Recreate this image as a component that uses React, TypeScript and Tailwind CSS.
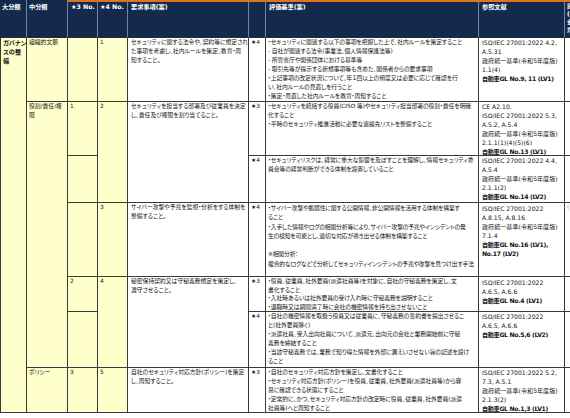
import React from "react";

type RefLine = { t: string; b?: boolean };

const base =
  "font-['DejaVu_Sans','Noto_Sans_CJK_JP',sans-serif] [font-feature-settings:'palt'] text-[5.8px] leading-[9px] text-[#141414]";

function Lines({ lines, lh }: { lines: string[]; lh?: string }) {
  return (
    <>
      {lines.map((l, i) => (
        <div key={i} className={`whitespace-nowrap ${lh ?? "h-[9px]"}`}>
          {l === "" ? "\u00a0" : l}
        </div>
      ))}
    </>
  );
}

function Refs({ lines }: { lines: RefLine[] }) {
  return (
    <>
      {lines.map((l, i) => (
        <div
          key={i}
          className={`whitespace-nowrap h-[9px] ${l.b ? "font-bold tracking-[-0.3px]" : ""}`}
        >
          {l.t}
        </div>
      ))}
    </>
  );
}

const cellB = "border-r border-b border-[#3a3a3a] overflow-hidden px-[2px]";
const yellow = "bg-[#ffffcc]";
const ref = "text-[6.1px] px-[3px]";
const ev = "tracking-[-0.05px]";

export default function App() {
  return (
    <div className="w-[570px] h-[418px] overflow-hidden bg-white">
      <div
        className={`grid w-[605px] grid-cols-[27px_41px_30px_30px_121px_17px_213px_86px_40px] grid-rows-[38px_64px_54px_47px_74px_35px_56px_45px] ${base}`}
      >
        {/* header */}
        <div className="col-start-1 row-start-1 bg-[#142a4c] text-white font-bold text-[6.2px] border-r border-[#74849c] border-b border-b-[#2a2a2a] px-[2px] pt-[2px] whitespace-nowrap overflow-hidden">
          大分類
        </div>
        <div className="col-start-2 row-start-1 bg-[#142a4c] text-white font-bold text-[6.2px] border-r border-[#74849c] border-b border-b-[#2a2a2a] px-[2px] pt-[2px] whitespace-nowrap overflow-hidden">
          中分類
        </div>
        <div className="col-start-3 row-start-1 bg-[#142a4c] text-white font-bold text-[6.2px] border-r border-[#74849c] border-b border-b-[#2a2a2a] border-t-2 border-t-[#e0731f] px-[3px] whitespace-nowrap overflow-hidden">
          ★3 No.
        </div>
        <div className="col-start-4 row-start-1 bg-[#142a4c] text-white font-bold text-[6.2px] border-r border-[#74849c] border-b border-b-[#2a2a2a] border-t-2 border-t-[#e0731f] px-[2px] whitespace-nowrap overflow-hidden">
          ★4 No.
        </div>
        <div className="col-start-5 row-start-1 bg-[#142a4c] text-white font-bold text-[6.2px] border-r border-[#74849c] border-b border-b-[#2a2a2a] border-t-2 border-t-[#e0731f] px-[3px] whitespace-nowrap overflow-hidden">
          要求事項(案)
        </div>
        <div className="col-start-6 row-start-1 bg-[#142a4c] border-r border-[#74849c] border-b border-b-[#2a2a2a] border-t-2 border-t-[#e0731f]" />
        <div className="col-start-7 row-start-1 bg-[#142a4c] text-white font-bold text-[6.2px] border-r border-[#74849c] border-b border-b-[#2a2a2a] border-t-2 border-t-[#e0731f] px-[3px] whitespace-nowrap overflow-hidden">
          評価基準(案)
        </div>
        <div className="col-start-8 row-start-1 bg-[#142a4c] text-white font-bold text-[6.2px] border-r border-[#74849c] border-b border-b-[#2a2a2a] border-t-2 border-t-[#e0731f] px-[3px] whitespace-nowrap overflow-hidden">
          参照文献
        </div>
        <div className="col-start-9 row-start-1 bg-[#142a4c] text-white font-bold text-[6.2px] border-b border-b-[#2a2a2a] border-t-2 border-t-[#e0731f] px-[2px] overflow-hidden leading-[8px]">
          <div>評</div>
          <div>(</div>
          <div>金</div>
          <div>た</div>
        </div>

        {/* col1 大分類 */}
        <div className={`col-start-1 row-start-2 row-span-7 border-l ${cellB} ${yellow} font-bold text-[6.2px]`}>
          <Lines lines={["ガバナン", "スの整", "備"]} />
        </div>

        {/* col2 中分類 */}
        <div className={`col-start-2 row-start-2 ${cellB} ${yellow}`}>
          <Lines lines={["組織的文脈"]} />
        </div>
        <div className={`col-start-2 row-start-3 row-span-5 ${cellB} ${yellow}`}>
          <Lines lines={["役割/責任/権", "限"]} />
        </div>
        <div className={`col-start-2 row-start-8 ${cellB} ${yellow}`}>
          <Lines lines={["ポリシー"]} />
        </div>

        {/* col3 ★3 No. */}
        <div className={`col-start-3 row-start-2 ${cellB} ${yellow}`} />
        <div className={`col-start-3 row-start-3 ${cellB} ${yellow}`}>1</div>
        <div className={`col-start-3 row-start-4 ${cellB} ${yellow}`} />
        <div className={`col-start-3 row-start-5 ${cellB} ${yellow}`} />
        <div className={`col-start-3 row-start-6 ${cellB} ${yellow}`}>2</div>
        <div className={`col-start-3 row-start-7 ${cellB} ${yellow}`} />
        <div className={`col-start-3 row-start-8 ${cellB} ${yellow}`}>3</div>

        {/* col4 ★4 No. */}
        <div className={`col-start-4 row-start-2 ${cellB} ${yellow}`}>1</div>
        <div className={`col-start-4 row-start-3 row-span-2 ${cellB} ${yellow}`}>2</div>
        <div className={`col-start-4 row-start-5 ${cellB} ${yellow}`}>3</div>
        <div className={`col-start-4 row-start-6 row-span-2 ${cellB} ${yellow}`}>4</div>
        <div className={`col-start-4 row-start-8 ${cellB} ${yellow}`}>5</div>

        {/* col5 要求事項 */}
        <div className={`col-start-5 row-start-2 ${cellB} px-[3px]`}>
          <Lines
            lines={[
              "セキュリティに関する法令や、契約等に規定され",
              "た事項を考慮し、社内ルールを策定、教育・周",
              "知すること。",
            ]}
          />
        </div>
        <div className={`col-start-5 row-start-3 row-span-2 ${cellB} px-[3px]`}>
          <Lines lines={["セキュリティを担当する部署及び従業員を決定", "し、責任及び権限を割り当てること。"]} />
        </div>
        <div className={`col-start-5 row-start-5 ${cellB} px-[3px]`}>
          <Lines lines={["サイバー攻撃や予兆を監視・分析をする体制を", "整備すること。"]} />
        </div>
        <div className={`col-start-5 row-start-6 row-span-2 ${cellB} px-[3px]`}>
          <Lines lines={["秘密保持契約又は守秘義務規定を策定し、", "遵守させること。"]} />
        </div>
        <div className={`col-start-5 row-start-8 ${cellB} px-[3px]`}>
          <Lines lines={["自社のセキュリティ対応方針(ポリシー)を策定", "し、周知すること。"]} />
        </div>

        {/* col6 star */}
        <div className={`col-start-6 row-start-2 ${cellB} whitespace-nowrap`}>★4</div>
        <div className={`col-start-6 row-start-3 ${cellB} whitespace-nowrap`}>★3</div>
        <div className={`col-start-6 row-start-4 ${cellB} whitespace-nowrap`}>★4</div>
        <div className={`col-start-6 row-start-5 ${cellB} whitespace-nowrap`}>★4</div>
        <div className={`col-start-6 row-start-6 ${cellB} whitespace-nowrap`}>★3</div>
        <div className={`col-start-6 row-start-7 ${cellB} whitespace-nowrap`}>★4</div>
        <div className={`col-start-6 row-start-8 ${cellB} whitespace-nowrap`}>★3</div>

        {/* col7 評価基準 */}
        <div className={`col-start-7 row-start-2 ${cellB} ${ev}`}>
          <Lines
            lines={[
              "・セキュリティに関連する以下の事項を把握した上で、社内ルールを策定すること",
              "- 自社が関連する法令(事業法、個人情報保護法等)",
              "- 所管省庁や関係団体における基準等",
              "- 取引先等が提示する新規事項等も含めた、関係者からの要求事項",
              "・上記事項の改定状況について、年１回以上の頻度又は必要に応じて確認を行",
              "い、社内ルールの見直しを行うこと",
              "・策定・見直した社内ルールを教育・周知すること",
            ]}
          />
        </div>
        <div className={`col-start-7 row-start-3 ${cellB} ${ev}`}>
          <Lines
            lines={[
              "・セキュリティを統括する役員(CISO 等)やセキュリティ担当部署の役割・責任を明確",
              "化すること",
              "・平時のセキュリティ推進活動に必要な連絡先リストを整備すること",
            ]}
          />
        </div>
        <div className={`col-start-7 row-start-4 ${cellB} ${ev}`}>
          <Lines
            lines={[
              "・セキュリティリスクは、経営に重大な影響を及ぼすことを理解し、情報セキュリティ委",
              "員会等の経営判断ができる体制を設置していること",
            ]}
          />
        </div>
        <div className={`col-start-7 row-start-5 ${cellB} tracking-[-0.15px] pt-[1px]`}>
          <Lines
            lines={[
              "・サイバー攻撃や脆弱性に関する公開情報、非公開情報を活用する体制を構築す",
              "ること",
              "・入手した情報やログの相関分析等により、サイバー攻撃の予兆やインシデントの発",
              "生の検知を可能とし、適切な対応が導き出せる体制を構築すること",
              "",
              "※相関分析：",
              "複合的なログなどで分析してセキュリティインシデントの予兆や攻撃を見つけ出す手法",
            ]}
            lh="h-[9.3px] leading-[9.3px]"
          />
        </div>
        <div className={`col-start-7 row-start-6 ${cellB} ${ev}`}>
          <Lines
            lines={[
              "・役員、従業員、社外要員(派遣社員等)を対象に、自社の守秘義務を策定し、文",
              "書化すること",
              "・入社時あるいは社外要員の受け入れ時に守秘義務を説明すること",
              "・退職時又は期間満了時に会社の機密情報を持ち出させないこと",
            ]}
            lh="h-[8.6px] leading-[8.6px]"
          />
        </div>
        <div className={`col-start-7 row-start-7 ${cellB} ${ev}`}>
          <Lines
            lines={[
              "・自社の機密情報を取扱う役員又は従業員に、守秘義務の誓約書を提出させるこ",
              "と(社外要員除く)",
              "・派遣社員、受入出向社員について、派遣元、出向元の会社と業務開始前に守秘",
              "義務を締結すること",
              "・当該守秘義務では、業務で知り得た情報を外部に漏えいさせない旨の記述を設け",
              "ること",
            ]}
          />
        </div>
        <div className={`col-start-7 row-start-8 ${cellB} ${ev}`}>
          <Lines
            lines={[
              "・自社のセキュリティ対応方針を策定し、文書化すること",
              "・セキュリティ対応方針(ポリシー)を役員、従業員、社外要員(派遣社員等)から容",
              "易に確認できる状態にすること",
              "・定常的に、かつ、セキュリティ対応方針の改定時に役員、従業員、社外要員(派遣",
              "社員等)へと周知すること",
            ]}
          />
        </div>

        {/* col8 参照文献 */}
        <div className={`col-start-8 row-start-2 ${cellB} ${ref}`}>
          <Refs
            lines={[
              { t: "ISO/IEC 27001:2022 4.2," },
              { t: "A.5.31" },
              { t: "政府統一基準(令和5年度版)" },
              { t: "1.1(4)" },
              { t: "自動車GL No.9, 11 (LV1)", b: true },
            ]}
          />
        </div>
        <div className={`col-start-8 row-start-3 ${cellB} ${ref}`}>
          <Refs
            lines={[
              { t: "CE A2.10." },
              { t: "ISO/IEC 27001:2022 5.3," },
              { t: "A.5.2, A.5.4" },
              { t: "政府統一基準(令和5年度版)" },
              { t: "2.1.1(1)(4)(5)(6)" },
              { t: "自動車GL No.13 (LV1)", b: true },
            ]}
          />
        </div>
        <div className={`col-start-8 row-start-4 ${cellB} ${ref}`}>
          <Refs
            lines={[
              { t: "ISO/IEC 27001:2022 4.4," },
              { t: "A.5.4" },
              { t: "政府統一基準(令和5年度版)" },
              { t: "2.1.1(2)" },
              { t: "自動車GL No.14 (LV2)", b: true },
            ]}
          />
        </div>
        <div className={`col-start-8 row-start-5 ${cellB} ${ref} pt-[1px]`}>
          <Refs
            lines={[
              { t: "ISO/IEC 27001:2022" },
              { t: "A.8.15, A.8.16" },
              { t: "政府統一基準(令和5年度版)" },
              { t: "7.1.4" },
              { t: "自動車GL No.16 (LV1),", b: true },
              { t: "No.17 (LV2)", b: true },
            ]}
          />
        </div>
        <div className={`col-start-8 row-start-6 ${cellB} ${ref} pt-[1px]`}>
          <Refs
            lines={[
              { t: "ISO/IEC 27001:2022" },
              { t: "A.6.5, A.6.6" },
              { t: "自動車GL No.4 (LV1)", b: true },
            ]}
          />
        </div>
        <div className={`col-start-8 row-start-7 ${cellB} ${ref}`}>
          <Refs
            lines={[
              { t: "ISO/IEC 27001:2022" },
              { t: "A.6.5, A.6.6" },
              { t: "自動車GL No.5,6 (LV2)", b: true },
            ]}
          />
        </div>
        <div className={`col-start-8 row-start-8 ${cellB} ${ref}`}>
          <Refs
            lines={[
              { t: "ISO/IEC 27001:2022 5.2," },
              { t: "7.3, A.5.1" },
              { t: "政府統一基準(令和5年度版)" },
              { t: "2.1.3(2)" },
              { t: "自動車GL No.1,3 (LV1)", b: true },
            ]}
          />
        </div>

        {/* col9 */}
        <div className={`col-start-9 row-start-2 ${cellB}`} />
        <div className={`col-start-9 row-start-3 ${cellB}`} />
        <div className={`col-start-9 row-start-4 ${cellB}`} />
        <div className={`col-start-9 row-start-5 ${cellB} text-[#9a9a9a]`}>(</div>
        <div className={`col-start-9 row-start-6 ${cellB}`} />
        <div className={`col-start-9 row-start-7 ${cellB}`} />
        <div className={`col-start-9 row-start-8 ${cellB}`} />
      </div>
    </div>
  );
}
